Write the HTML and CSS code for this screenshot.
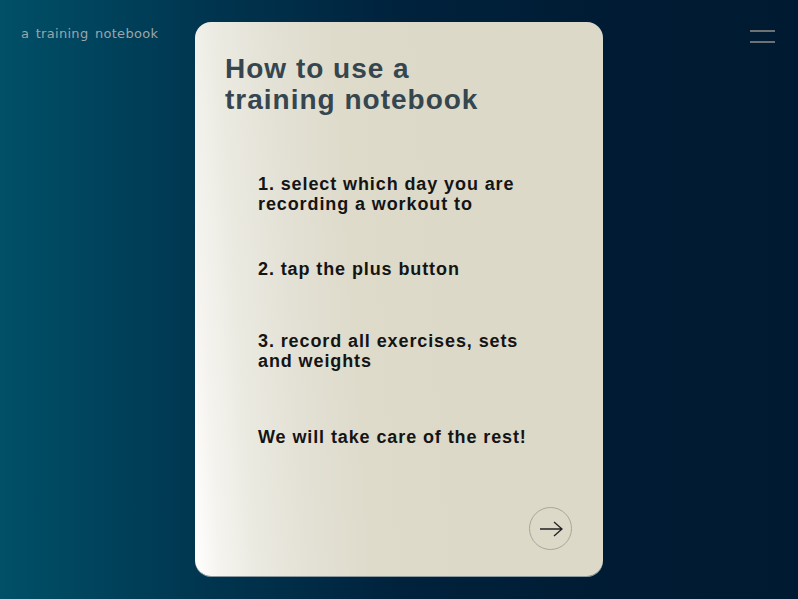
FILE: index.html
```html
<!DOCTYPE html>
<html>
<head>
<meta charset="utf-8">
<link rel="stylesheet" href="styles.css">
</head>
<body>
<div class="page">
  <header class="topbar">
    <div class="brand">a training notebook</div>
    <button class="menu" aria-label="menu"><span></span><span></span></button>
  </header>
  <main class="card">
    <h1 class="title">How to use a<br>training notebook</h1>
    <ol class="steps">
      <li class="step s1">1. select which day you are<br>recording a workout to</li>
      <li class="step s2">2. tap the plus button</li>
      <li class="step s3">3. record all exercises, sets<br>and weights</li>
      <li class="step s4">We will take care of the rest!</li>
    </ol>
    <div class="actions">
      <button class="next" aria-label="next">
        <svg width="24" height="16" viewBox="0 0 24 16"><path d="M1 8 H23 M15 1 L23 8 L15 15" fill="none" stroke="#222" stroke-width="1.3"/></svg>
      </button>
    </div>
  </main>
</div>
</body>
</html>
```
FILE: styles.css
```css
* { box-sizing: border-box; }
html, body { margin: 0; padding: 0; }
body { width: 798px; height: 599px; overflow: hidden; }
.page {
  position: relative;
  width: 798px; height: 599px;
  background: linear-gradient(to right, #005068 0%, #003650 25%, #00223d 50%, #001c34 75%, #001a31 100%);
  display: flex; justify-content: center;
  padding-top: 22px;
}
.topbar {
  position: absolute; left: 0; top: 0; right: 0;
  display: flex; justify-content: space-between; align-items: flex-start;
  padding: 26px 23px 0 21px;
}
.brand {
  font-family: "DejaVu Sans", sans-serif;
  font-size: 13px; color: #9aa6ac; word-spacing: 2px; letter-spacing: 0.3px;
}
.menu {
  background: none; border: 0; padding: 0; margin-top: 4px;
  display: flex; flex-direction: column; gap: 9px; width: 25px;
}
.menu span { display: block; height: 2px; background: #6c7175; width: 25px; }
.card {
  width: 408px; height: 554px;
  border-radius: 16px;
  background: linear-gradient(86deg, #ffffff 0%, #f4f3ee 6%, #ebeae1 14%, #e3e1d5 26%, #dedbcb 40%, #dcd9c8 60%, #dcd9c8 100%);
  box-shadow: 0 1px 0 #8a9aa0;
  display: flex; flex-direction: column;
  padding: 31px 30px 0 30px;
}
.title {
  margin: 0;
  font-family: "Liberation Sans", Arial, sans-serif;
  font-weight: bold; font-size: 28px; line-height: 31px; letter-spacing: 1px;
  color: #36464f;
}
.steps {
  list-style: none; margin: 0; padding: 0 0 0 33px;
  font-family: "Liberation Sans", Arial, sans-serif;
  font-weight: bold; font-size: 18px; line-height: 20px; letter-spacing: 0.9px; color: #141414;
}
.s1 { margin-top: 59px; }
.s2 { margin-top: 45px; }
.s3 { margin-top: 52px; }
.s4 { margin-top: 56px; }
.actions { margin-top: auto; display: flex; justify-content: flex-end; padding: 0 1px 26px 0; }
.next {
  width: 43px; height: 43px; border-radius: 50%;
  border: 1px solid #aaa698; background: transparent;
  display: flex; align-items: center; justify-content: center; padding: 0;
}
```
